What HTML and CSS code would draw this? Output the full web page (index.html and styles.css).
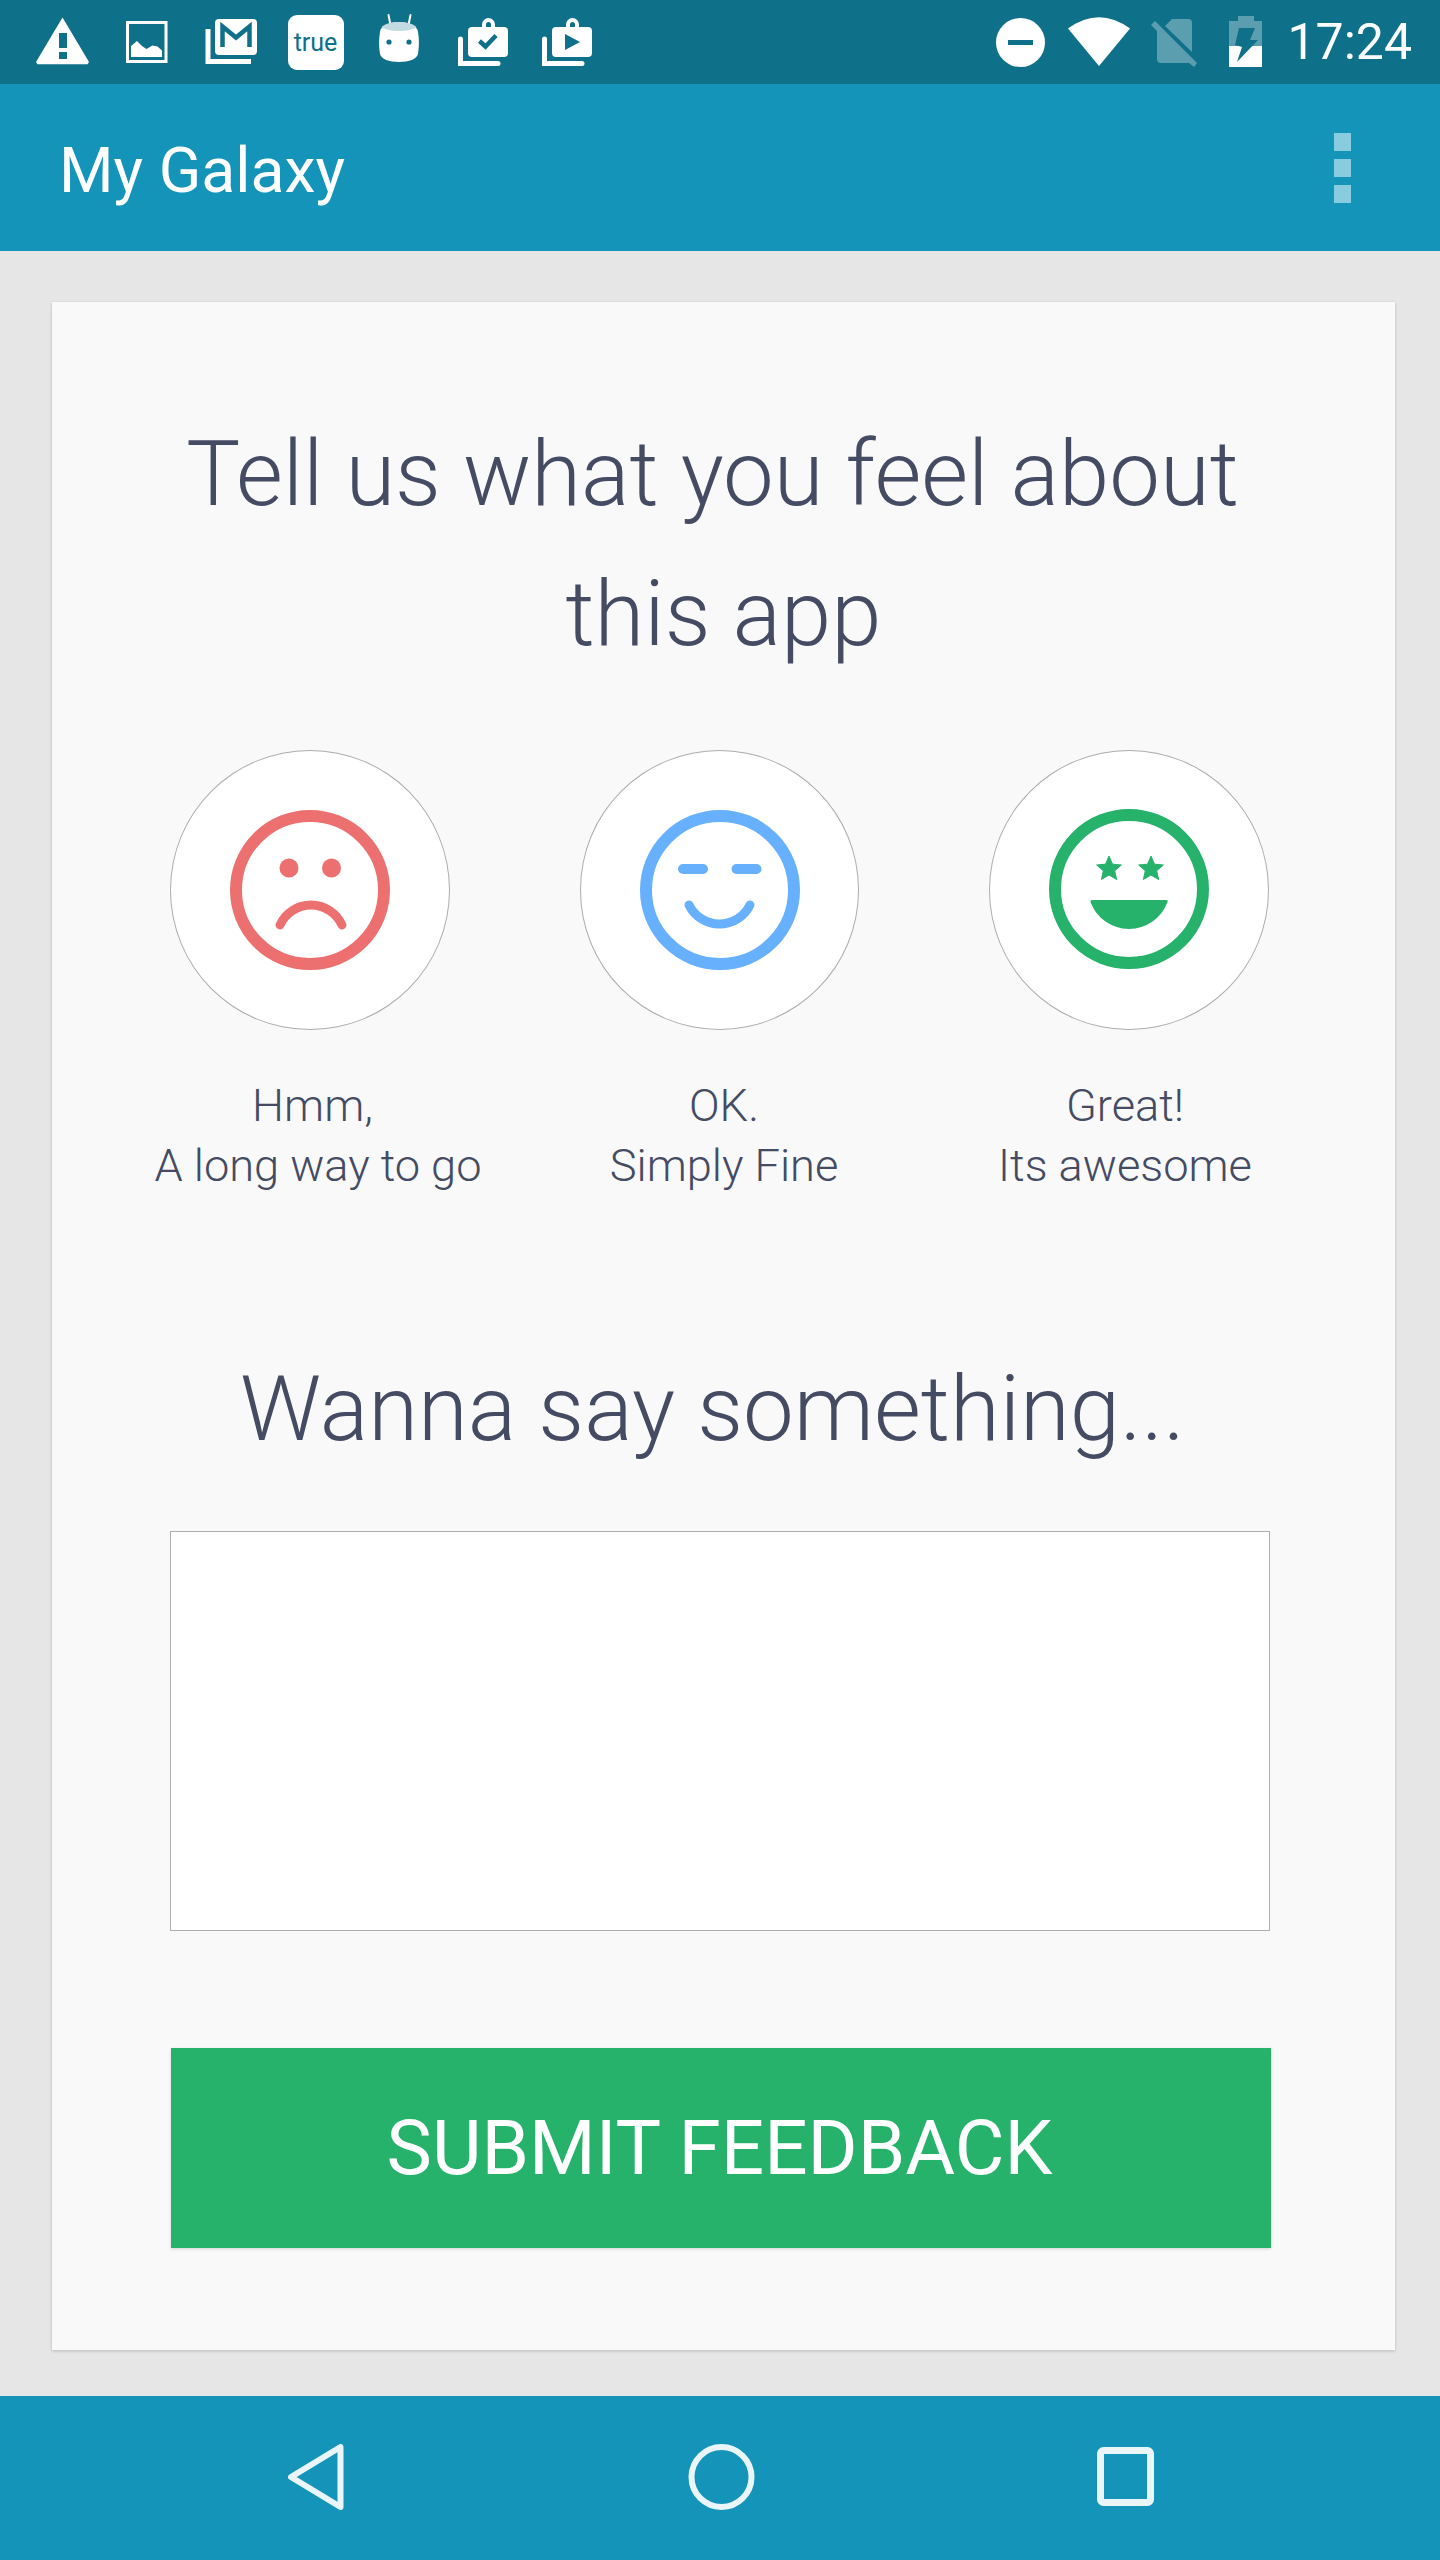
FILE: index.html
```html
<!DOCTYPE html>
<html lang="en">
<head>
<meta charset="utf-8">
<title>My Galaxy</title>
<link rel="stylesheet" href="styles.css">
</head>
<body>
<div class="screen">
  <header class="status-bar">
    <div class="status-left">
      <svg class="slot" viewBox="20 0 84 84"><path class="w" d="M62.500 17.500 89 62l-1.500 2.300H37.500L36 62Z"/><rect class="t" x="59" y="33" width="8" height="15"/><rect class="t" x="59" y="52" width="8" height="7"/></svg>
      <svg class="slot" viewBox="104 0 84 84"><rect x="127.500" y="22.500" width="38.500" height="39" fill="none" stroke="#fff" stroke-width="3"/><path class="w" d="M131 57V46l6-5 5 5 4.500 3 6-3.500 5 1 4.500 4V57Z"/></svg>
      <svg class="slot" viewBox="188 0 84 84"><path d="M208 29v32.500h43" fill="none" stroke="#fff" stroke-width="5"/><rect class="w" x="215" y="19" width="42" height="36" rx="4"/><path d="M222.500 47V26.500l13.500 11 13.500-11V47" fill="none" stroke="#0e7089" stroke-width="4.500"/></svg>
      <div class="slot true-slot"><span class="true-badge">true</span></div>
      <svg class="slot" viewBox="356 0 84 84"><path d="M388.500 15l2 10M410.500 15l-2 10" stroke="#fff" stroke-width="2" stroke-linecap="round"/><path class="w" d="M380 32c0-6 10-10 19-10s19 4 19 10c1 6 1.500 13 0 22-1 5-9 8-19 8s-18-3-19-8c-1.500-9-1-16 0-22Z"/><path fill="#c2dbe2" d="M381.500 27c3-3 10-5 17.500-5s14.500 2 17.500 5c-3 2.500-10 4-17.500 4s-14.500-1.500-17.500-4Z"/><circle class="t" cx="389" cy="42" r="2.600"/><circle class="t" cx="409" cy="42" r="2.600"/></svg>
      <svg class="slot" viewBox="440 0 84 84"><path d="M460.500 39v24.500h37.500" fill="none" stroke="#fff" stroke-width="5" stroke-linecap="round"/><path d="M484 27v-2.500a4.500 4.500 0 0 1 9 0V27" fill="none" stroke="#fff" stroke-width="4"/><rect class="w" x="468" y="27" width="40" height="30" rx="4"/><path d="M479.500 41l6 5.500 10.500-11" fill="none" stroke="#0e7089" stroke-width="4.500"/></svg>
      <svg class="slot" viewBox="524 0 84 84"><path d="M544.500 39v24.500h37.500" fill="none" stroke="#fff" stroke-width="5" stroke-linecap="round"/><path d="M568 27v-2.500a4.500 4.500 0 0 1 9 0V27" fill="none" stroke="#fff" stroke-width="4"/><rect class="w" x="552" y="27" width="40" height="30" rx="4"/><path class="t" d="M565 34l15 8-15 8Z"/></svg>
    </div>
    <div class="status-right">
      <svg class="slot-r slot-dnd" viewBox="984 0 76 84"><circle class="w" cx="1020.500" cy="42.500" r="24.500"/><rect class="t" x="1008" y="40" width="25" height="5"/></svg>
      <svg class="slot-r slot-wifi" viewBox="1060 0 78 84"><path class="w" d="M1068 28.500Q1099 6 1130 28.500L1099 66Z"/></svg>
      <svg class="slot-r slot-sim" viewBox="1138 0 73 84"><path class="w dim" d="M1165 26l7-7h16q4 0 4 4v29ZM1151 25l4-4 42 42-3 4-5-4h-28q-4 0-4-4V31Z"/></svg>
      <svg class="slot-r slot-batt" viewBox="1211 0 69 84"><path class="w dim" d="M1238 16h16v5h8v25h-33V21h9Z"/><rect class="w" x="1229" y="46" width="33" height="21"/><path class="t" d="M1239 28h16l-5 12h8l-21 22 5-15-7-2Z"/></svg>
      <span class="clock">17:24</span>
    </div>
  </header>

  <div class="app-bar">
    <h1 class="app-title">My Galaxy</h1>
    <div class="overflow"><i class="dot"></i><i class="dot"></i><i class="dot"></i></div>
  </div>

  <main class="content">
    <section class="card">
      <h2 class="heading">
        <span class="heading-line shifted">Tell us what you feel about</span>
        <span class="heading-line">this app</span>
      </h2>

      <div class="faces">
        <div class="face-circle">
          <svg class="face" viewBox="0 0 160 160">
            <circle cx="80" cy="80" r="74" fill="none" stroke="#ec7070" stroke-width="12"/>
            <circle cx="59" cy="58" r="9.500" fill="#ec7070"/>
            <circle cx="101.500" cy="58" r="9.500" fill="#ec7070"/>
            <path d="M50 115A34 34 0 0 1 112 115" fill="none" stroke="#ec7070" stroke-width="9" stroke-linecap="round"/>
          </svg>
        </div>
        <div class="face-circle">
          <svg class="face" viewBox="0 0 160 160">
            <circle cx="80" cy="80" r="74" fill="none" stroke="#66b0fe" stroke-width="12"/>
            <path d="M43 59H63M96.500 59H116.500" fill="none" stroke="#66b0fe" stroke-width="10" stroke-linecap="round"/>
            <path d="M49 95A34 34 0 0 0 110 95" fill="none" stroke="#66b0fe" stroke-width="9" stroke-linecap="round"/>
          </svg>
        </div>
        <div class="face-circle">
          <svg class="face face-great" viewBox="0 0 160 160">
            <circle cx="80" cy="80" r="74" fill="none" stroke="#26b26b" stroke-width="12"/>
            <polygon transform="translate(60 60)" fill="#26b26b" stroke="#26b26b" stroke-width="1" stroke-linejoin="round" points="0,-13 3.500,-4.800 12.360,-4.020 5.700,1.800 7.640,10.520 0,6 -7.640,10.520 -5.700,1.800 -12.360,-4.020 -3.500,-4.800"/>
            <polygon transform="translate(102 60)" fill="#26b26b" stroke="#26b26b" stroke-width="1" stroke-linejoin="round" points="0,-13 3.500,-4.800 12.360,-4.020 5.700,1.800 7.640,10.520 0,6 -7.640,10.520 -5.700,1.800 -12.360,-4.020 -3.500,-4.800"/>
            <path fill="#26b26b" d="M41.500 93Q41 91 43 91H117Q119.500 91 118.500 93A41 41 0 0 1 41.500 93Z"/>
          </svg>
        </div>
      </div>

      <div class="labels">
        <p class="label"><span class="label-first">Hmm,</span><br>A long way to go</p>
        <p class="label">OK.<br>Simply Fine</p>
        <p class="label">Great!<br>Its awesome</p>
      </div>

      <h2 class="heading heading-say shifted">Wanna say something...</h2>

      <textarea class="comment" aria-label="Feedback"></textarea>

      <button class="submit" type="button">SUBMIT FEEDBACK</button>
    </section>
  </main>

  <nav class="nav-bar">
    <svg class="nav-icon" viewBox="0 0 80 80"><path d="M64.500 9V69L15 39Z" fill="none" stroke="#eaf5f9" stroke-width="6" stroke-linejoin="round"/></svg>
    <svg class="nav-icon" viewBox="0 0 80 80"><circle cx="40.500" cy="39" r="30" fill="none" stroke="#eaf5f9" stroke-width="6"/></svg>
    <svg class="nav-icon" viewBox="0 0 80 80"><rect x="15.500" y="12.500" width="50" height="52" rx="3" fill="none" stroke="#eaf5f9" stroke-width="7"/></svg>
  </nav>
</div>
</body>
</html>
```

FILE: styles.css
```css
* { box-sizing: border-box; }
html, body { margin: 0; padding: 0; }
body { font-family: Roboto, "Noto Sans", sans-serif; background: #e6e6e6; }
.screen { width: 1440px; height: 2560px; display: flex; flex-direction: column; overflow: hidden; }

.w { fill: #fff; }
.t { fill: #0e7089; }
.dim { fill-opacity: .32; }

.status-bar { height: 84px; flex: none; background: #0e7089; display: flex; justify-content: space-between; padding: 0 28px 0 20px; }
.status-left, .status-right { display: flex; align-items: center; height: 84px; }
.slot { width: 84px; height: 84px; flex: none; }
.true-slot { display: flex; align-items: center; justify-content: center; padding-left: 3px; }
.true-badge { width: 56px; height: 55px; border-radius: 9px; background: #fff; color: #0e7089; font-size: 25px; line-height: 55px; text-align: center; }
.slot-r { height: 84px; flex: none; }
.slot-dnd { width: 76px; }
.slot-wifi { width: 78px; }
.slot-sim { width: 73px; }
.slot-batt { width: 69px; }
.clock { color: #fff; font-size: 50px; line-height: 84px; margin-left: 7px; }

.app-bar { height: 167px; flex: none; background: #1494b9; display: flex; align-items: center; justify-content: space-between; padding: 5px 89px 0 59px; }
.app-title { margin: 0; color: #fff; font-size: 62.5px; font-weight: 400; }
.overflow { display: flex; flex-direction: column; gap: 8px; margin-top: -5px; }
.dot { display: block; width: 17px; height: 18px; background: #8accdf; }

.content { flex: 1; padding: 51px 45px 46px 52px; display: flex; }
.card { flex: 1; background: #f9f9f9; box-shadow: 0 1px 3px rgba(0,0,0,.2); padding-top: 102px; color: #444b63; }

.heading { margin: 0; font-size: 90.5px; font-weight: 300; line-height: 140px; text-align: center; }
.heading-line { display: block; }
.shifted { padding-right: 22px; }
.heading-say { margin-top: 143px; }

.faces { display: flex; gap: 130px; padding-left: 118px; margin-top: 66px; }
.face-circle { width: 279.5px; height: 280px; border-radius: 50%; background: #fff; border: 1px solid #adadad; padding-left: 1px; display: flex; align-items: center; justify-content: center; }
.face { width: 160px; height: 160px; }
.face-great { margin-top: -2px; }

.labels { display: grid; grid-template-columns: 400px 412px 390px; padding-left: 66px; margin-top: 46px; }
.label { margin: 0; font-size: 45.2px; font-weight: 300; line-height: 60px; text-align: center; }
.label-first { padding-right: 11px; }

.comment { display: block; width: 1100px; height: 400px; margin: 52px 0 0 118px; background: #fff; border: 1px solid #adadad; border-radius: 0; resize: none; outline: none; padding: 0; }

.submit { display: block; width: 1100px; height: 200px; margin: 117px 0 0 119px; padding: 0 3px 0 0; border: 0; background: #26b26b; color: #fff; font-family: inherit; font-size: 76.4px; font-weight: 400; box-shadow: 0 1px 3px rgba(0,0,0,.15); }

.nav-bar { height: 164px; flex: none; background: #1494b9; display: flex; align-items: center; justify-content: space-between; padding: 0 275px 0 276px; }
.nav-icon { width: 80px; height: 80px; }
```
